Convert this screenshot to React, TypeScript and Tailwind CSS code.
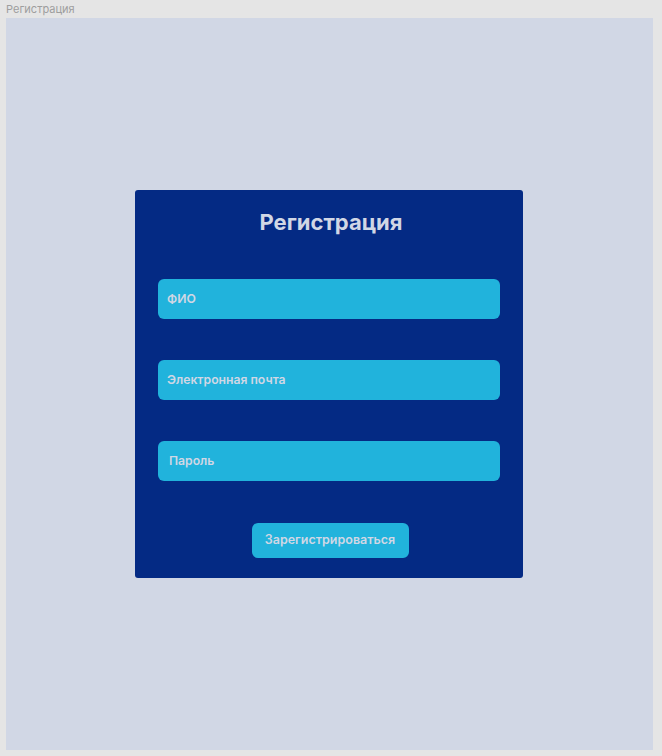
export default function App() {
  const fields = [
    { label: "ФИО", pad: "pl-[9px]" },
    { label: "Электронная почта", pad: "pl-[9px]" },
    { label: "Пароль", pad: "pl-[11px]" },
  ];
  return (
    <div className="w-[662px] h-[756px] bg-[#e5e5e5] font-['Inter',sans-serif] flex flex-col">
      <div className="h-[18px] pl-[6px] text-[11px] leading-[18px] text-[#9e9e9e]">Регистрация</div>
      <div className="ml-[6px] w-[647px] h-[732px] bg-[#d1d7e5] flex items-start justify-center pt-[172px] pr-[1px]">
        <div className="w-[388px] h-[388px] bg-[#042a84] rounded-[3px] flex flex-col items-center">
          <h1 className="mt-[18px] ml-[4px] h-[28px] text-[22px] leading-[28px] font-bold text-[#d1d7e5]">Регистрация</h1>
          <div className="mt-[43px] flex flex-col gap-[41px] w-[342px]">
            {fields.map((f) => (
              <div
                key={f.label}
                className={`h-[40px] rounded-[6px] bg-[#21b3dc] flex items-center pt-[1px] ${f.pad} text-[12.2px] font-semibold text-[#d1d7e5]`}
              >
                {f.label}
              </div>
            ))}
          </div>
          <button className="mt-[42px] ml-[2px] w-[157px] h-[35px] rounded-[6px] bg-[#21b3dc] text-[12.5px] font-semibold text-[#d1d7e5]">
            Зарегистрироваться
          </button>
        </div>
      </div>
    </div>
  );
}
